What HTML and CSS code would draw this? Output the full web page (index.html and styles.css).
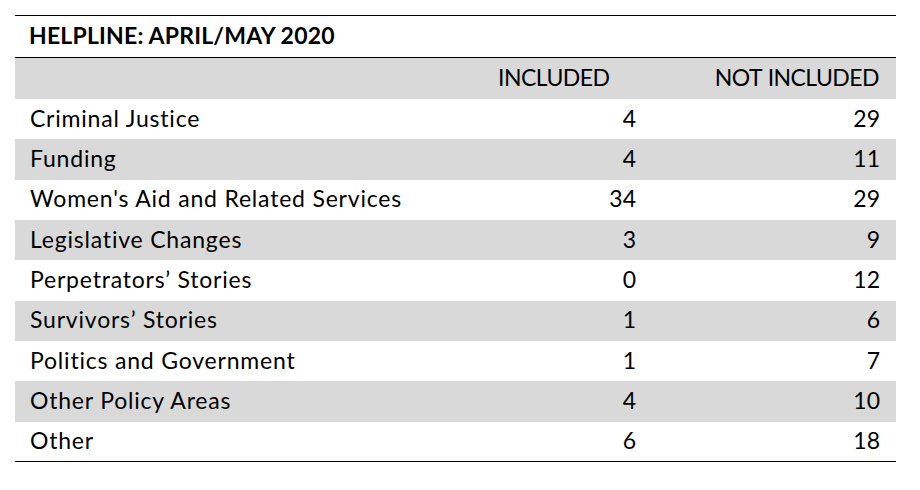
FILE: index.html
```html
<!DOCTYPE html>
<html>
<head>
<meta charset="utf-8">
<link rel="stylesheet" href="styles.css">
</head>
<body>
<table class="tbl">
  <colgroup>
    <col class="c1">
    <col class="c2">
    <col class="c3">
  </colgroup>
  <thead>
    <tr class="title-row"><th colspan="3" class="title">HELPLINE: APRIL/MAY 2020</th></tr>
    <tr class="head-row shade"><th></th><th class="h-inc">INCLUDED</th><th class="h-not">NOT INCLUDED</th></tr>
  </thead>
  <tbody>
    <tr><td class="lbl">Criminal Justice</td><td class="num">4</td><td class="num">29</td></tr>
    <tr class="shade"><td class="lbl">Funding</td><td class="num">4</td><td class="num">11</td></tr>
    <tr><td class="lbl">Women's Aid and Related Services</td><td class="num">34</td><td class="num">29</td></tr>
    <tr class="shade"><td class="lbl">Legislative Changes</td><td class="num">3</td><td class="num">9</td></tr>
    <tr><td class="lbl">Perpetrators’ Stories</td><td class="num">0</td><td class="num">12</td></tr>
    <tr class="shade"><td class="lbl">Survivors’ Stories</td><td class="num">1</td><td class="num">6</td></tr>
    <tr><td class="lbl">Politics and Government</td><td class="num">1</td><td class="num">7</td></tr>
    <tr class="shade"><td class="lbl">Other Policy Areas</td><td class="num">4</td><td class="num">10</td></tr>
    <tr><td class="lbl">Other</td><td class="num">6</td><td class="num">18</td></tr>
  </tbody>
</table>
</body>
</html>
```

FILE: styles.css
```css
html, body {
  margin: 0;
  padding: 0;
  background: #ffffff;
}
body {
  font-family: "Lato", "Noto Sans", sans-serif;
  color: #000;
}
.tbl {
  margin: 15px 0 0 15px;
  width: 881px;
  border-collapse: collapse;
  table-layout: fixed;
  border-top: 1px solid #000;
  border-bottom: 1px solid #000;
}
.c1 { width: 468px; }
.c2 { width: 169px; }
.c3 { width: 244px; }
th, td {
  padding: 0 16px 3px 15px;
  font-size: 23px;
  font-weight: 400;
  text-align: left;
  vertical-align: middle;
  white-space: nowrap;
}
.title-row th {
  height: 37px;
  padding-bottom: 4px;
  padding-left: 14px;
  border-bottom: 1px solid #000;
  font-weight: 700;
  font-size: 23px;
  letter-spacing: 0.2px;
}
.head-row th {
  height: 38px;
  letter-spacing: -0.55px;
  word-spacing: 1px;
}
.head-row .h-not {
  padding-right: 17px;
}
tbody tr {
  height: 40.33px;
}
.lbl {
  letter-spacing: 0.8px;
}
.shade {
  background: #d9d9d9;
}
.h-not, .num {
  text-align: right;
}
```
